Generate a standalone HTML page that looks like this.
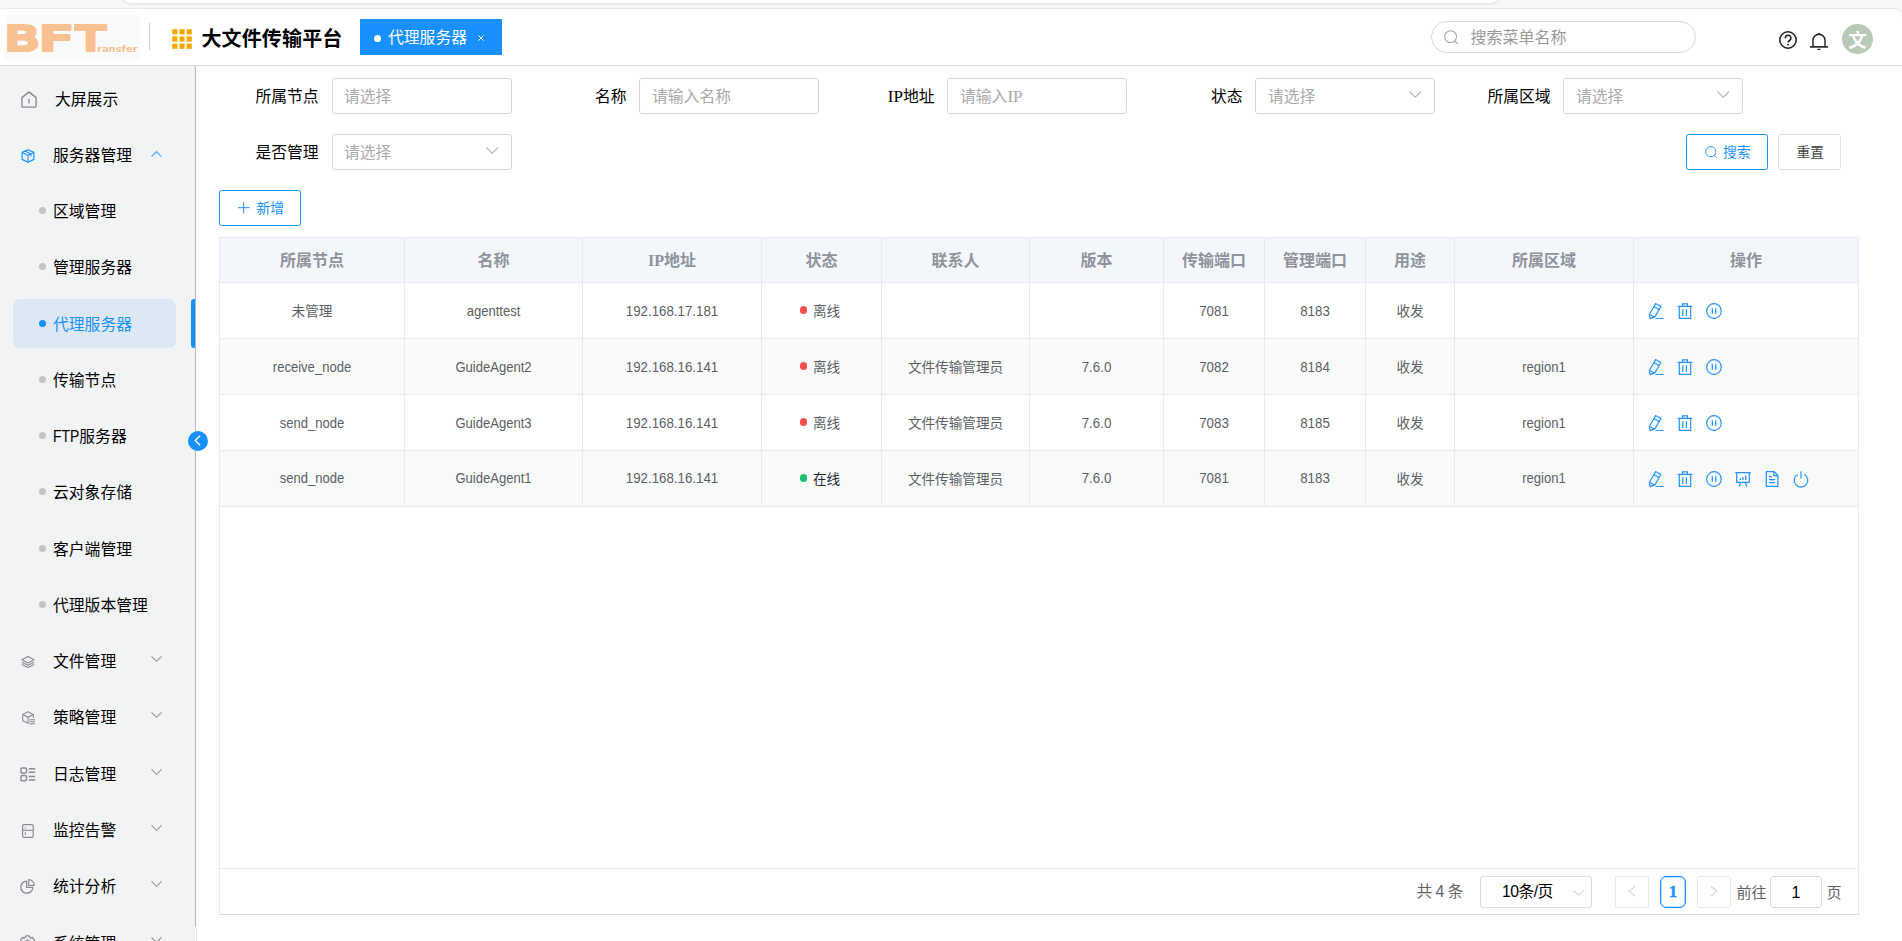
<!DOCTYPE html>
<html lang="zh-CN">
<head>
<meta charset="utf-8">
<title>大文件传输平台</title>
<style>
*{box-sizing:border-box;margin:0;padding:0}
html,body{width:1902px;height:941px;overflow:hidden;background:#f7f7f7}
body{position:relative;font-family:"Liberation Sans","Noto Sans CJK SC",sans-serif;color:#000;font-size:16px}
.abs{position:absolute}
.t{position:absolute;white-space:nowrap;line-height:20px;height:20px}
svg{position:absolute;overflow:visible}
#bar{position:absolute;left:120px;top:-20px;width:1382px;height:23px;background:#fff;border-radius:12px;box-shadow:0 1px 3px rgba(0,0,0,.09)}
#page{position:absolute;left:-1px;top:8px;width:1904px;height:940px;background:#fff;border:1px solid #e9e9e9;border-radius:3px 9px 0 0}
#hline{position:absolute;left:0;top:65px;width:1902px;height:1px;background:#dcdcdc}
#logobg{position:absolute;left:5px;top:15px;width:135px;height:46px;background:#fafafa}
#bft{position:absolute;left:0;top:0;width:0;height:0}
.bl{position:absolute;display:block;top:13.4px;font-family:"DejaVu Sans","Liberation Sans",sans-serif;font-weight:bold;font-size:34.8px;line-height:50px;color:#f9c090;text-shadow:0 2px 0 #f9c090,0 1px 0 #f9c090;transform-origin:0 0;white-space:nowrap}
#ransfer{position:absolute;left:97px;top:24.4px;font-family:"DejaVu Sans","Liberation Sans",sans-serif;font-weight:bold;font-size:9.3px;line-height:50px;color:#f9c090;white-space:nowrap;transform-origin:0 0;transform:scaleX(1.07)}
#vdiv{position:absolute;left:149px;top:23px;width:1px;height:27px;background:#c9ccd3}
#title{position:absolute;left:201.4px;top:25px;letter-spacing:0.15px;font-size:20px;font-weight:bold;line-height:28px;white-space:nowrap;color:#000}
#tab{position:absolute;left:360px;top:19px;width:142px;height:36px;background:#1890ff;color:#fff}
#search{position:absolute;left:1431px;top:21px;width:265px;height:32px;border:1px solid #d8d8d8;border-radius:16px;background:#fff}
#avatar{position:absolute;left:1842px;top:24px;width:31px;height:30px;border-radius:50%;background:#b8c9b6;color:#fff;font-weight:bold;font-size:18.6px;line-height:33.4px;text-align:center;overflow:hidden}
#side{position:absolute;left:0;top:66px;width:195px;height:875px;background:#f2f3f5}
#sideline{position:absolute;left:195px;top:66px;width:1px;height:860.5px;background:#b7b8bd}
#sideline2{position:absolute;left:196px;top:926.5px;width:1px;height:15px;background:#ededed}
.lbl{position:absolute;left:53px;font-size:15.8px;line-height:20px;height:20px;white-space:nowrap;color:#000}
.dot{position:absolute;left:39px;width:7px;height:7px;border-radius:50%;background:#c4c4c7}
#sel{position:absolute;left:13px;top:299px;width:163px;height:49px;border-radius:7px;background:#dee8f5}
#selbar{position:absolute;left:191px;top:299px;width:4px;height:49px;border-radius:3px 0 0 3px;background:#1890ff}
#collapse{position:absolute;left:188px;top:430.5px;width:20px;height:20px;border-radius:50%;background:#1890ff}
.flabel{position:absolute;font-size:15.8px;line-height:20px;height:20px;white-space:nowrap;text-align:right;width:120px;color:#000}
.finput{position:absolute;width:180px;height:36px;border:1px solid #d6d6d6;border-radius:3px;background:#fff}
.finput>span{position:absolute;left:11px;top:8px;font-size:15.8px;line-height:20px;color:#aaa;white-space:nowrap}
.btn{position:absolute;height:36px;border-radius:2.5px;background:#fff;font-size:13.75px;line-height:20px;white-space:nowrap}
.btn span{position:absolute;top:7.5px;height:20px}
#thead{position:absolute;left:220px;top:238px;width:1638px;height:44px;background:#f3f6fb}
.hl{position:absolute;left:220px;width:1638px;height:1px;background:#e6eaf3}
.vl{position:absolute;top:238px;width:1px;height:268px;background:#e6eaf3}
.stripe{position:absolute;left:220px;width:1638px;height:55px;background:#f9fafb}
.th{position:absolute;top:251px;height:20px;line-height:20px;font-size:16px;font-weight:bold;color:#8f939b;text-align:center;white-space:nowrap}
.td{position:absolute;height:20px;line-height:20px;margin-top:1px;font-size:13.6px;color:#5c5f66;text-align:center;white-space:nowrap}
.td.l{font-size:14.5px;margin-top:-0.2px;transform:scaleX(.917)}.td.a{transform:scaleX(.9)}
.sd{position:absolute;width:7.6px;height:7.6px;border-radius:50%}
.pg{position:absolute;top:876px;height:32px;border-radius:3px;background:#fff}
</style>
</head>
<body>
<div id="bar"></div>
<div id="page"></div>
<div id="logobg"></div>
<div id="bft"><span class="bl" style="left:3px;transform:scaleX(1.45)">B</span><span class="bl" style="left:36.8px;transform:scaleX(1.64)">F</span><span class="bl" style="left:73.6px;transform:scaleX(1.4)">T</span></div><div id="ransfer">ransfer</div>
<div id="vdiv"></div>
<svg style="left:172px;top:29px" width="20" height="20" viewBox="0 0 20 20"><rect x="0.20" y="0.20" width="5.2" height="5.2" fill="#f5a700"/><rect x="7.40" y="0.20" width="5.2" height="5.2" fill="#f5a700"/><rect x="14.60" y="0.20" width="5.2" height="5.2" fill="#f5a700"/><rect x="0.20" y="7.40" width="5.2" height="5.2" fill="#f5a700"/><rect x="7.40" y="7.40" width="5.2" height="5.2" fill="#f5a700"/><rect x="14.60" y="7.40" width="5.2" height="5.2" fill="#f5a700"/><rect x="0.20" y="14.60" width="5.2" height="5.2" fill="#f5a700"/><rect x="7.40" y="14.60" width="5.2" height="5.2" fill="#f5a700"/><rect x="14.60" y="14.60" width="5.2" height="5.2" fill="#f5a700"/></svg>
<div id="title">大文件传输平台</div>
<div id="tab"><div class="abs" style="left:14px;top:15.5px;width:7px;height:7px;border-radius:50%;background:#fff"></div><div class="t" style="left:28px;top:8.5px;font-size:15.8px;color:#fff">代理服务器</div><svg style="left:118px;top:15.5px" width="6" height="6" viewBox="0 0 6 6"><path d="M0.3 0.3L5.7 5.7M5.7 0.3L0.3 5.7" stroke="#fff" stroke-width="1" fill="none"/></svg></div>
<div id="search"><svg style="left:11.5px;top:8px" width="15" height="15" viewBox="0 0 15 15"><circle cx="6.6" cy="6.6" r="5.9" fill="none" stroke="#a3a3a3" stroke-width="1.05"/><path d="M10.9 10.9L13.8 13.8" stroke="#a3a3a3" stroke-width="1.05" fill="none"/></svg><div class="t" style="left:38.5px;top:5.5px;font-size:16px;color:#999">搜索菜单名称</div></div>
<svg style="left:1779px;top:31px" width="18" height="18" viewBox="0 0 18 18"><circle cx="9" cy="9" r="8.2" fill="none" stroke="#1f1a17" stroke-width="1.5"/><path d="M6.3 7.2a2.8 2.8 0 1 1 4.2 2.3c-.9.55-1.4 1-1.4 2.1" fill="none" stroke="#1f1a17" stroke-width="1.5"/><circle cx="9.05" cy="13.6" r="0.95" fill="#1f1a17"/></svg>
<svg style="left:1810px;top:32px" width="18" height="19" viewBox="0 0 18 19"><path d="M3 14.6V8.2a6 6 0 0 1 12 0v6.4" fill="none" stroke="#1f1a17" stroke-width="1.4"/><path d="M0 14.9H18" stroke="#1f1a17" stroke-width="1.6"/><path d="M8 17.4h2" stroke="#1f1a17" stroke-width="1.2" stroke-linecap="round"/><path d="M8.2 1.9L9 0.9l.8 1z" fill="#1f1a17" stroke="#1f1a17" stroke-width=".6"/></svg>
<div id="avatar">文</div>
<div id="hline"></div>
<div id="side"></div><div id="sideline"></div><div id="sideline2"></div>
<div id="sel"></div><div id="selbar"></div>
<div class="lbl" style="top:90px;color:#000;left:55px">大屏展示</div>
<svg style="left:21px;top:91.05px" width="16" height="17" viewBox="0 0 16 17"><path d="M0.9 6.6L8 0.9l7.1 5.7v8.3a1.2 1.2 0 0 1-1.2 1.2H2.1a1.2 1.2 0 0 1-1.2-1.2z" fill="none" stroke="#8b8b92" stroke-width="1.4" stroke-linejoin="round"/><path d="M8 8v4.6" stroke="#8b8b92" stroke-width="1.4"/></svg>
<div class="lbl" style="top:146px;color:#000">服务器管理</div>
<svg style="left:21px;top:149.15px" width="14" height="14" viewBox="0 0 14 14"><path d="M7 0.7L12.9 3.4V10.4L7 13.3L1.1 10.4V3.4z" fill="none" stroke="#1890ff" stroke-width="1.2" stroke-linejoin="round"/><path d="M1.1 3.5L7 6.3l5.9-2.8M7 6.3v7M4 2.1l5.9 2.8v2.6" fill="none" stroke="#1890ff" stroke-width="1.1" stroke-linejoin="round"/></svg>
<svg style="left:151px;top:151.35px" width="11" height="6" viewBox="0 0 11 6"><path d="M0.5 5.6L5.5 0.7l5 4.9" fill="none" stroke="#5aa9ff" stroke-width="1.3"/></svg>
<div class="lbl" style="top:202px;color:#000">区域管理</div>
<div class="dot" style="top:207.45px"></div>
<div class="lbl" style="top:258px;color:#000">管理服务器</div>
<div class="dot" style="top:263.45px"></div>
<div class="lbl" style="top:315px;color:#1890ff">代理服务器</div>
<div class="dot" style="top:320.45px;background:#1890ff"></div>
<div class="lbl" style="top:371px;color:#000">传输节点</div>
<div class="dot" style="top:376.45px"></div>
<div class="lbl" style="top:427px;color:#000"><span style="display:inline-block;font-size:17px;line-height:20px;vertical-align:top;transform:scaleX(.82);transform-origin:0 50%;margin-right:-5.8px;position:relative;top:0px">FTP</span>服务器</div>
<div class="dot" style="top:432.45px"></div>
<div class="lbl" style="top:483px;color:#000">云对象存储</div>
<div class="dot" style="top:488.45px"></div>
<div class="lbl" style="top:540px;color:#000">客户端管理</div>
<div class="dot" style="top:545.45px"></div>
<div class="lbl" style="top:596px;color:#000">代理版本管理</div>
<div class="dot" style="top:601.45px"></div>
<div class="lbl" style="top:652px;color:#000">文件管理</div>
<svg style="left:21px;top:655.75px" width="14" height="12" viewBox="0 0 14 12"><path d="M7 0.6l6.2 3.2L7 7 0.8 3.8z" fill="none" stroke="#8b8b92" stroke-width="1.1" stroke-linejoin="round"/><path d="M0.8 6.2L7 9.3l6.2-3.1M0.8 8.4L7 11.5l6.2-3.1" fill="none" stroke="#8b8b92" stroke-width="1.1" stroke-linejoin="round"/></svg>
<svg style="left:150.5px;top:655.75px" width="11" height="6" viewBox="0 0 11 6"><path d="M0.5 0.4L5.5 5.3l5-4.9" fill="none" stroke="#96969d" stroke-width="1.15"/></svg>
<div class="lbl" style="top:708px;color:#000">策略管理</div>
<svg style="left:22px;top:711.15px" width="14" height="14" viewBox="0 0 14 14"><path d="M6.4 12.6L0.7 9.8V3.5L6 0.8l5.3 2.7v3.4" fill="none" stroke="#8b8b92" stroke-width="1.1" stroke-linejoin="round"/><path d="M0.7 3.5L6 6.2l5.3-2.7M6 6.2v6.2" fill="none" stroke="#8b8b92" stroke-width="1.1" stroke-linejoin="round"/><path d="M7.4 8.7H13M7.4 10.7H13M7.4 12.7H13" stroke="#8b8b92" stroke-width="1.1"/></svg>
<svg style="left:150.5px;top:711.75px" width="11" height="6" viewBox="0 0 11 6"><path d="M0.5 0.4L5.5 5.3l5-4.9" fill="none" stroke="#96969d" stroke-width="1.15"/></svg>
<div class="lbl" style="top:765px;color:#000">日志管理</div>
<svg style="left:20px;top:767.35px" width="16" height="15" viewBox="0 0 16 15"><rect x="0.9" y="0.9" width="5.6" height="5.2" rx="1.4" fill="none" stroke="#8b8b92" stroke-width="1.5"/><rect x="0.9" y="8.6" width="5.6" height="5.2" rx="1.4" fill="none" stroke="#8b8b92" stroke-width="1.5"/><path d="M8.7 1.8H15.2M8.7 5.2H15.2M8.7 9.5H15.2M8.7 12.9H15.2" stroke="#8b8b92" stroke-width="1.5"/></svg>
<svg style="left:150.5px;top:768.75px" width="11" height="6" viewBox="0 0 11 6"><path d="M0.5 0.4L5.5 5.3l5-4.9" fill="none" stroke="#96969d" stroke-width="1.15"/></svg>
<div class="lbl" style="top:821px;color:#000">监控告警</div>
<svg style="left:22px;top:823.75px" width="12" height="14" viewBox="0 0 12 14"><rect x="0.6" y="0.6" width="10.6" height="12.8" rx="1.3" fill="none" stroke="#8b8b92" stroke-width="1.2"/><path d="M0.6 6.3H11.2" stroke="#8b8b92" stroke-width="1.1"/><path d="M3.4 3.2v1.4M3.4 8.3v2.6" stroke="#8b8b92" stroke-width="1.1"/></svg>
<svg style="left:150.5px;top:824.75px" width="11" height="6" viewBox="0 0 11 6"><path d="M0.5 0.4L5.5 5.3l5-4.9" fill="none" stroke="#96969d" stroke-width="1.15"/></svg>
<div class="lbl" style="top:877px;color:#000">统计分析</div>
<svg style="left:20px;top:879.35px" width="15" height="15" viewBox="0 0 15 15"><path d="M6.6 2.2A6 6 0 1 0 12.8 8.4H6.6z" fill="none" stroke="#8b8b92" stroke-width="1.3" stroke-linejoin="round"/><path d="M8.7 0.7A5.6 5.6 0 0 1 14.3 6.3H8.7z" fill="none" stroke="#8b8b92" stroke-width="1.2" stroke-linejoin="round"/></svg>
<svg style="left:150.5px;top:880.75px" width="11" height="6" viewBox="0 0 11 6"><path d="M0.5 0.4L5.5 5.3l5-4.9" fill="none" stroke="#96969d" stroke-width="1.15"/></svg>
<div class="lbl" style="top:934px;color:#000">系统管理</div>
<svg style="left:20px;top:935.25px" width="15" height="15" viewBox="0 0 15 15"><path d="M0.8 7V4.6L2.6 2.5 4.6 3 6 0.8H9L10.4 3 12.4 2.5 14.2 4.6V7" fill="none" stroke="#8b8b92" stroke-width="1.3" stroke-linejoin="round"/><circle cx="7.5" cy="7.5" r="2.4" fill="none" stroke="#8b8b92" stroke-width="1.2"/></svg>
<svg style="left:150.5px;top:936.75px" width="11" height="6" viewBox="0 0 11 6"><path d="M0.5 0.4L5.5 5.3l5-4.9" fill="none" stroke="#96969d" stroke-width="1.15"/></svg>
<div id="collapse"><svg style="left:6px;top:4.5px" width="7" height="11" viewBox="0 0 7 11"><path d="M6 0.7L1.2 5.5 6 10.3" fill="none" stroke="#fff" stroke-width="1.3"/></svg></div>
<div class="flabel" style="left:198.60px;top:87px">所属节点</div>
<div class="finput" style="left:332.00px;top:78px"><span style="left:11px">请选择</span></div>
<div class="flabel" style="left:506.60px;top:87px">名称</div>
<div class="finput" style="left:639.00px;top:78px"><span style="left:12px">请输入名称</span></div>
<div class="flabel" style="left:814.60px;top:87px"><span style="font-family:'Liberation Serif',serif;font-size:17px;line-height:1">IP</span>地址</div>
<div class="finput" style="left:947.00px;top:78px"><span style="left:12px">请输入<span style="font-family:'Liberation Serif',serif;font-size:17px;line-height:1">IP</span></span></div>
<div class="flabel" style="left:1122.60px;top:87px">状态</div>
<div class="finput" style="left:1255.00px;top:78px"><span style="left:12px">请选择</span><svg style="left:153.4px;top:12.4px" width="12.4" height="7" viewBox="0 0 12.4 7"><path d="M0.4 0.5L6.2 6.2 12 0.5" fill="none" stroke="#b3b7bf" stroke-width="1.15"/></svg></div>
<div class="flabel" style="left:1430.60px;top:87px">所属区域</div>
<div class="finput" style="left:1563.00px;top:78px"><span style="left:12px">请选择</span><svg style="left:153.4px;top:12.4px" width="12.4" height="7" viewBox="0 0 12.4 7"><path d="M0.4 0.5L6.2 6.2 12 0.5" fill="none" stroke="#b3b7bf" stroke-width="1.15"/></svg></div>
<div class="flabel" style="left:198.60px;top:143px">是否管理</div>
<div class="finput" style="left:332.00px;top:134px"><span>请选择</span><svg style="left:153.4px;top:12.4px" width="12.4" height="7" viewBox="0 0 12.4 7"><path d="M0.4 0.5L6.2 6.2 12 0.5" fill="none" stroke="#b3b7bf" stroke-width="1.15"/></svg></div>
<div class="btn" style="left:1686px;top:134px;width:82px;border:1px solid #1890ff;color:#1890ff"><svg style="left:17.6px;top:10.6px" width="13" height="13" viewBox="0 0 13 13"><circle cx="5.7" cy="5.7" r="5.1" fill="none" stroke="#1890ff" stroke-width="0.95"/><path d="M9.4 9.4L11.6 11.6" stroke="#1890ff" stroke-width="0.95"/></svg><span style="left:36px">搜索</span></div>
<div class="btn" style="left:1778px;top:134px;width:63px;border:1px solid #dcdfe6;color:#444"><span style="left:17.5px">重置</span></div>
<div class="btn" style="left:219px;top:190px;width:82px;border:1px solid #1890ff;color:#1890ff"><svg style="left:18.4px;top:11.3px" width="11.4" height="11.4" viewBox="0 0 11.4 11.4"><path d="M5.7 0V11.4M0 5.7H11.4" stroke="#1890ff" stroke-width="1"/></svg><span style="left:36.5px">新增</span></div>
<div class="abs" style="left:219px;top:237px;width:1640px;height:678px;border:1px solid #e6eaf3;border-bottom-color:#dadada;background:#fff"></div>
<div id="thead"></div>
<div class="stripe" style="top:339px;background:#fafafa"></div><div class="stripe" style="top:451px;background:#f8fafa"></div>
<div class="hl" style="top:282px"></div>
<div class="hl" style="top:338px"></div>
<div class="hl" style="top:394px"></div>
<div class="hl" style="top:450px"></div>
<div class="hl" style="top:506px"></div>
<div class="hl" style="top:868px"></div>
<div class="vl" style="left:404px"></div>
<div class="vl" style="left:582px"></div>
<div class="vl" style="left:761px"></div>
<div class="vl" style="left:881px"></div>
<div class="vl" style="left:1029px"></div>
<div class="vl" style="left:1163px"></div>
<div class="vl" style="left:1264px"></div>
<div class="vl" style="left:1365px"></div>
<div class="vl" style="left:1454px"></div>
<div class="vl" style="left:1633px"></div>
<div class="th" style="left:220px;width:184px">所属节点</div>
<div class="th" style="left:405px;width:177px">名称</div>
<div class="th" style="left:583px;width:178px"><span style="font-family:'Liberation Serif',serif">IP</span>地址</div>
<div class="th" style="left:762px;width:119px">状态</div>
<div class="th" style="left:882px;width:147px">联系人</div>
<div class="th" style="left:1030px;width:133px">版本</div>
<div class="th" style="left:1164px;width:100px">传输端口</div>
<div class="th" style="left:1265px;width:100px">管理端口</div>
<div class="th" style="left:1366px;width:88px">用途</div>
<div class="th" style="left:1455px;width:178px">所属区域</div>
<div class="th" style="left:1634px;width:224px">操作</div>
<div class="td" style="left:220px;width:184px;top:301.20px">未管理</div>
<div class="td l a" style="left:405px;width:177px;top:301.20px">agenttest</div>
<div class="td l" style="left:583px;width:178px;top:301.20px">192.168.17.181</div>
<div class="sd" style="left:799.8px;top:306.00px;background:#ff4d4f"></div>
<div class="td" style="left:813px;top:301.20px;text-align:left">离线</div>
<div class="td l" style="left:1164px;width:100px;top:301.20px">7081</div>
<div class="td l" style="left:1265px;width:100px;top:301.20px">8183</div>
<div class="td" style="left:1366px;width:88px;top:301.20px">收发</div>
<svg style="left:1648px;top:303.20px" width="16" height="16" viewBox="0 0 16 16"><path d="M7.6 0.6L12.9 3.5 6.9 13.9 2.1 15.6 1.4 11.3z" fill="none" stroke="#1f93ff" stroke-width="1.15" stroke-linejoin="round"/><path d="M5.9 3.5L11.1 6.4M1.5 11.4L6.8 13.9M7.6 15.5H15.6" fill="none" stroke="#1f93ff" stroke-width="1.15"/></svg>
<svg style="left:1677px;top:303.20px" width="16" height="16" viewBox="0 0 16 16"><path d="M0.6 3.3H15.4M5.6 3V0.8h4.8V3M2.3 3.4V15.3H13.7V3.4M5.9 6.3v6.6M9.4 6.3v6.6" fill="none" stroke="#1f93ff" stroke-width="1.2"/></svg>
<svg style="left:1706px;top:303.20px" width="16" height="16" viewBox="0 0 16 16"><circle cx="8" cy="8" r="7.3" fill="none" stroke="#1f93ff" stroke-width="1.2"/><path d="M6.3 5.2v5.6M9.7 5.2v5.6" stroke="#1f93ff" stroke-width="1.3"/></svg>
<div class="td l a" style="left:220px;width:184px;top:357.20px">receive_node</div>
<div class="td l a" style="left:405px;width:177px;top:357.20px">GuideAgent2</div>
<div class="td l" style="left:583px;width:178px;top:357.20px">192.168.16.141</div>
<div class="sd" style="left:799.8px;top:362.00px;background:#ff4d4f"></div>
<div class="td" style="left:813px;top:357.20px;text-align:left">离线</div>
<div class="td" style="left:882px;width:147px;top:357.20px">文件传输管理员</div>
<div class="td l" style="left:1030px;width:133px;top:357.20px">7.6.0</div>
<div class="td l" style="left:1164px;width:100px;top:357.20px">7082</div>
<div class="td l" style="left:1265px;width:100px;top:357.20px">8184</div>
<div class="td" style="left:1366px;width:88px;top:357.20px">收发</div>
<div class="td l a" style="left:1455px;width:178px;top:357.20px">region1</div>
<svg style="left:1648px;top:359.20px" width="16" height="16" viewBox="0 0 16 16"><path d="M7.6 0.6L12.9 3.5 6.9 13.9 2.1 15.6 1.4 11.3z" fill="none" stroke="#1f93ff" stroke-width="1.15" stroke-linejoin="round"/><path d="M5.9 3.5L11.1 6.4M1.5 11.4L6.8 13.9M7.6 15.5H15.6" fill="none" stroke="#1f93ff" stroke-width="1.15"/></svg>
<svg style="left:1677px;top:359.20px" width="16" height="16" viewBox="0 0 16 16"><path d="M0.6 3.3H15.4M5.6 3V0.8h4.8V3M2.3 3.4V15.3H13.7V3.4M5.9 6.3v6.6M9.4 6.3v6.6" fill="none" stroke="#1f93ff" stroke-width="1.2"/></svg>
<svg style="left:1706px;top:359.20px" width="16" height="16" viewBox="0 0 16 16"><circle cx="8" cy="8" r="7.3" fill="none" stroke="#1f93ff" stroke-width="1.2"/><path d="M6.3 5.2v5.6M9.7 5.2v5.6" stroke="#1f93ff" stroke-width="1.3"/></svg>
<div class="td l a" style="left:220px;width:184px;top:413.20px">send_node</div>
<div class="td l a" style="left:405px;width:177px;top:413.20px">GuideAgent3</div>
<div class="td l" style="left:583px;width:178px;top:413.20px">192.168.16.141</div>
<div class="sd" style="left:799.8px;top:418.00px;background:#ff4d4f"></div>
<div class="td" style="left:813px;top:413.20px;text-align:left">离线</div>
<div class="td" style="left:882px;width:147px;top:413.20px">文件传输管理员</div>
<div class="td l" style="left:1030px;width:133px;top:413.20px">7.6.0</div>
<div class="td l" style="left:1164px;width:100px;top:413.20px">7083</div>
<div class="td l" style="left:1265px;width:100px;top:413.20px">8185</div>
<div class="td" style="left:1366px;width:88px;top:413.20px">收发</div>
<div class="td l a" style="left:1455px;width:178px;top:413.20px">region1</div>
<svg style="left:1648px;top:415.20px" width="16" height="16" viewBox="0 0 16 16"><path d="M7.6 0.6L12.9 3.5 6.9 13.9 2.1 15.6 1.4 11.3z" fill="none" stroke="#1f93ff" stroke-width="1.15" stroke-linejoin="round"/><path d="M5.9 3.5L11.1 6.4M1.5 11.4L6.8 13.9M7.6 15.5H15.6" fill="none" stroke="#1f93ff" stroke-width="1.15"/></svg>
<svg style="left:1677px;top:415.20px" width="16" height="16" viewBox="0 0 16 16"><path d="M0.6 3.3H15.4M5.6 3V0.8h4.8V3M2.3 3.4V15.3H13.7V3.4M5.9 6.3v6.6M9.4 6.3v6.6" fill="none" stroke="#1f93ff" stroke-width="1.2"/></svg>
<svg style="left:1706px;top:415.20px" width="16" height="16" viewBox="0 0 16 16"><circle cx="8" cy="8" r="7.3" fill="none" stroke="#1f93ff" stroke-width="1.2"/><path d="M6.3 5.2v5.6M9.7 5.2v5.6" stroke="#1f93ff" stroke-width="1.3"/></svg>
<div class="td l a" style="left:220px;width:184px;top:468.20px">send_node</div>
<div class="td l a" style="left:405px;width:177px;top:468.20px">GuideAgent1</div>
<div class="td l" style="left:583px;width:178px;top:468.20px">192.168.16.141</div>
<div class="sd" style="left:799.8px;top:474.00px;background:#19be6b"></div>
<div class="td" style="left:813px;top:469.20px;text-align:left;color:#1f2733">在线</div>
<div class="td" style="left:882px;width:147px;top:469.20px">文件传输管理员</div>
<div class="td l" style="left:1030px;width:133px;top:468.20px">7.6.0</div>
<div class="td l" style="left:1164px;width:100px;top:468.20px">7081</div>
<div class="td l" style="left:1265px;width:100px;top:468.20px">8183</div>
<div class="td" style="left:1366px;width:88px;top:469.20px">收发</div>
<div class="td l a" style="left:1455px;width:178px;top:468.20px">region1</div>
<svg style="left:1648px;top:471.20px" width="16" height="16" viewBox="0 0 16 16"><path d="M7.6 0.6L12.9 3.5 6.9 13.9 2.1 15.6 1.4 11.3z" fill="none" stroke="#1f93ff" stroke-width="1.15" stroke-linejoin="round"/><path d="M5.9 3.5L11.1 6.4M1.5 11.4L6.8 13.9M7.6 15.5H15.6" fill="none" stroke="#1f93ff" stroke-width="1.15"/></svg>
<svg style="left:1677px;top:471.20px" width="16" height="16" viewBox="0 0 16 16"><path d="M0.6 3.3H15.4M5.6 3V0.8h4.8V3M2.3 3.4V15.3H13.7V3.4M5.9 6.3v6.6M9.4 6.3v6.6" fill="none" stroke="#1f93ff" stroke-width="1.2"/></svg>
<svg style="left:1706px;top:471.20px" width="16" height="16" viewBox="0 0 16 16"><circle cx="8" cy="8" r="7.3" fill="none" stroke="#1f93ff" stroke-width="1.2"/><path d="M6.3 5.2v5.6M9.7 5.2v5.6" stroke="#1f93ff" stroke-width="1.3"/></svg>
<svg style="left:1735px;top:471.20px" width="16" height="16" viewBox="0 0 16 16"><path d="M0.3 1.7H15.7M1.7 1.9V11.4H14.3V1.9M5.8 11.6L4.1 15.6M10.2 11.6l1.7 4" fill="none" stroke="#1f93ff" stroke-width="1.2"/><path d="M5.3 9V7.3M8 9V6M10.7 9V4.6" stroke="#1f93ff" stroke-width="1.3"/></svg>
<svg style="left:1764px;top:471.20px" width="16" height="16" viewBox="0 0 16 16"><path d="M2.3 0.7H10.2L13.9 4.4V15.3H2.3z" fill="none" stroke="#1f93ff" stroke-width="1.25" stroke-linejoin="round"/><path d="M9.9 0.9V4.7h3.8M5 5.6h3M5 8.6h6.2M5 11.6h6.2" fill="none" stroke="#1f93ff" stroke-width="1.2"/></svg>
<svg style="left:1793px;top:471.20px" width="16" height="16" viewBox="0 0 16 16"><path d="M4.6 3.4A6.8 6.8 0 1 0 11.4 3.4" fill="none" stroke="#1f93ff" stroke-width="1.2"/><path d="M8 0.3V7.6" stroke="#1f93ff" stroke-width="1.2"/></svg>
<div class="t" style="left:1416.5px;top:882px;font-size:15.8px;word-spacing:-1.2px;color:#606266">共 4 条</div>
<div class="pg" style="left:1480px;width:112px;border:1px solid #d9dce3"><div class="t" style="left:21px;top:5px;font-size:15.8px;letter-spacing:-0.55px;color:#000">10条/页</div><svg style="left:92px;top:13px" width="11" height="6" viewBox="0 0 11 6"><path d="M0.5 0.4L5.5 5.3l5-4.9" fill="none" stroke="#b9bdc6" stroke-width="1"/></svg></div>
<div class="pg" style="left:1615px;width:34px;border:1px solid #e4e7ee"><svg style="left:12px;top:8.7px" width="8" height="11" viewBox="0 0 8 11"><path d="M7 0.5L1.3 5.3 7 10.1" fill="none" stroke="#d0d3da" stroke-width="1.1"/></svg></div>
<div class="pg" style="left:1660px;width:26px;border:1px solid #1890ff;border-radius:6px;box-shadow:inset 0 0 0 .3px #1890ff"><div class="t" style="left:0;width:24px;top:5px;text-align:center;font-family:'Liberation Serif',serif;font-weight:bold;font-size:17px;-webkit-text-stroke:.35px #1890ff;color:#1890ff">1</div></div>
<div class="pg" style="left:1697px;width:34px;border:1px solid #e4e7ee"><svg style="left:12.3px;top:8.7px" width="8" height="11" viewBox="0 0 8 11"><path d="M1 0.5L6.7 5.3 1 10.1" fill="none" stroke="#d0d3da" stroke-width="1.1"/></svg></div>
<div class="t" style="left:1736.5px;top:882.5px;font-size:15px;color:#606266">前往</div>
<div class="pg" style="left:1770px;width:52px;border:1px solid #d9dce3"><div class="t" style="left:0;width:50px;top:5.5px;text-align:center;font-size:16px;color:#000">1</div></div>
<div class="t" style="left:1826.5px;top:882.5px;font-size:15px;color:#606266">页</div>
</body>
</html>
